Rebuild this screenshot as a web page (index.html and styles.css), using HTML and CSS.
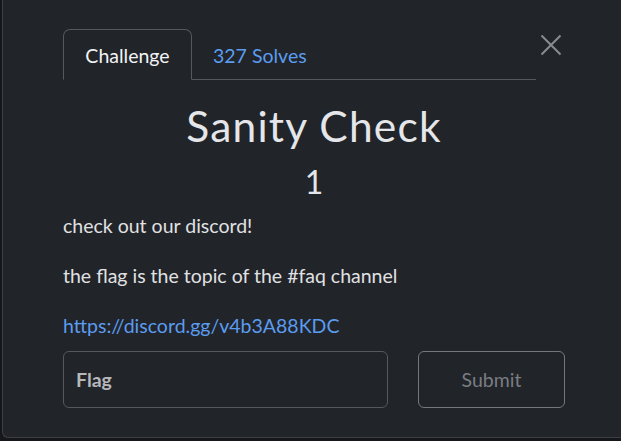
FILE: index.html
```html
<!DOCTYPE html>
<html>
<head>
<meta charset="utf-8">
<link rel="stylesheet" href="styles.css">
</head>
<body>
<div class="modal">
  <div class="header">
    <nav class="tabs">
      <div class="tab active">Challenge</div>
      <div class="tab link">327 Solves</div>
    </nav>
    <button class="close" aria-label="Close">
      <svg width="22" height="22" viewBox="0 0 22 22"><path d="M1.5 1.5 L20.5 20.5 M20.5 1.5 L1.5 20.5" stroke="#8a8c8f" stroke-width="2" fill="none"/></svg>
    </button>
  </div>
  <div class="content">
    <h2 class="title">Sanity Check</h2>
    <h3 class="value">1</h3>
    <p class="desc">check out our discord!</p>
    <p class="desc">the flag is the topic of the #faq channel</p>
    <p class="desc"><a href="#" class="url">https://discord.gg/v4b3A88KDC</a></p>
    <form class="submit-row">
      <input class="flag" type="text" placeholder="Flag">
      <button class="submit" type="button">Submit</button>
    </form>
  </div>
</div>
</body>
</html>
```
FILE: styles.css
```css
html, body {
  margin: 0;
  padding: 0;
  height: 100%;
  overflow: hidden;
}
body {
  background: #15171b;
  font-family: Lato, "Noto Sans", sans-serif;
}
.modal {
  box-sizing: border-box;
  margin: -10px 0 0 2px;
  width: 619px;
  height: 448px;
  background: #212429;
  border: 1px solid #3b3e43;
  border-right: 0;
  border-radius: 6px 0 0 6px;
  padding: 38px 0 0 60px;
}
.header {
  display: flex;
  align-items: flex-start;
}
.tabs {
  display: flex;
  width: 473px;
  height: 51px;
  border-bottom: 1px solid #55585d;
  box-sizing: border-box;
}
.tab {
  font-size: 19.5px;
  height: 51px;
  box-sizing: border-box;
  display: flex;
  align-items: center;
  padding: 2px 20px 0 20px;
}
.tab.active {
  width: 129px;
  justify-content: center;
  color: #f2f3f5;
  border: 1px solid #55585d;
  border-bottom: 1px solid #212429;
  border-radius: 7px 7px 0 0;
  height: 51px;
  background: #212429;
}
.tab.link {
  color: #5b9cf0;
  padding-left: 21px;
}
.close {
  margin: 5px 0 0 4px;
  background: none;
  border: 0;
  padding: 0;
  width: 22px;
  height: 22px;
  cursor: pointer;
}
.close svg { display: block; }
.content {
  width: 502px;
}
.title {
  margin: 22px 0 0 0;
  text-align: center;
  font-weight: 400;
  font-size: 42.5px;
  letter-spacing: 1.2px;
  line-height: 48px;
  color: #e4e6e9;
}
.value {
  margin: 14px 0 0 0;
  text-align: center;
  font-weight: 400;
  font-size: 32px;
  line-height: 36px;
  color: #e4e6e9;
}
.desc {
  margin: 0 0 25px 0;
  font-size: 19.5px;
  line-height: 25px;
  color: #e0e1e3;
}
.desc:first-of-type { margin-top: 13px; }
.url {
  color: #5b9cf0;
  text-decoration: none;
}
.submit-row {
  display: flex;
  justify-content: space-between;
  margin-top: -12px;
}
.flag {
  box-sizing: border-box;
  width: 325px;
  height: 57px;
  background: #212429;
  border: 1px solid #55585d;
  border-radius: 6px;
  padding: 0 12px;
  font-family: Lato, sans-serif;
  font-size: 19.5px;
  font-weight: 700;
  color: #e0e1e3;
  outline: none;
}
.flag::placeholder { color: #b5b7ba; }
.submit {
  box-sizing: border-box;
  width: 147px;
  height: 57px;
  background: transparent;
  border: 1px solid #74777c;
  border-radius: 6px;
  font-family: Lato, sans-serif;
  font-size: 19.5px;
  color: #7a7d82;
}
```
